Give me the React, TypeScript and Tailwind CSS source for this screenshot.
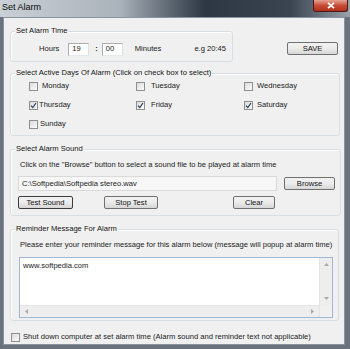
import type { ReactNode } from "react";

function Check({ checked, label, gap = "ml-[4px]" }: { checked?: boolean; label: string; gap?: string }) {
  return (
    <div className="flex items-center h-[10px]">
      <span className="relative w-[9px] h-[9px] border border-[#8e8f8f] bg-gradient-to-br from-[#dcdcdc] to-[#fbfbfb] flex items-center justify-center">
        {checked && (
          <svg width="7" height="7" viewBox="0 0 7 7">
            <path d="M1 3.6 L2.8 5.6 L6 1" fill="none" stroke="#2a3d5a" strokeWidth="1.2" />
          </svg>
        )}
      </span>
      <span className={gap}>{label}</span>
    </div>
  );
}

function Btn({ children, w, focus }: { children: ReactNode; w: string; focus?: boolean }) {
  return (
    <div
      className={`${w} h-[13px] rounded-[2px] border ${focus ? "border-[#3c3c3c]" : "border-[#707070]"} bg-gradient-to-b from-[#f2f2f2] via-[#ebebeb] to-[#d6d6d6] flex items-center justify-center text-[#111]`}
    >
      {children}
    </div>
  );
}

function Group({ title, className, children }: { title: string; className: string; children: ReactNode }) {
  return (
    <fieldset className={`border border-[#d5dfe5] rounded-[3px] shadow-[inset_1px_1px_0_#fff] ${className}`}>
      <legend className="ml-[4px] px-[1px] leading-[10px] text-[#111]">{title}</legend>
      {children}
    </fieldset>
  );
}

export default function App() {
  return (
    <div className="w-[350px] h-[349px] flex flex-col bg-[#6a737d] text-[7.6px] text-[#1a1a1a] overflow-hidden" style={{ fontFamily: '"Liberation Sans", Arial, sans-serif' }}>
      {/* title bar */}
      <div className="h-[17px] shrink-0 flex items-start bg-[#bfc6cd]">
        <div className="w-[120px] h-full bg-gradient-to-r from-[#c9d0d6] to-[#aab2ba] pl-[2px] pt-[2px]">
          <span className="text-[9px] leading-[11px] text-[#0a0a0a]">Set Alarm</span>
        </div>
        <div className="flex-1 h-full bg-gradient-to-r from-[#aab2ba] via-[#2e3844] to-[#3a4450]" />
        <div className="w-[60px] h-full bg-gradient-to-r from-[#3a4450] to-[#9aa3ac] flex justify-end">
          <div className="mr-[2px] w-[35px] h-[12px] rounded-b-[3px] border border-t-0 border-[#4a1a14] bg-gradient-to-b from-[#e4a193] via-[#c74a35] to-[#b0301e] flex items-center justify-center">
            <svg width="8" height="7" viewBox="0 0 8 7">
              <path d="M1 0.8 L7 6.2 M7 0.8 L1 6.2" stroke="#fff" strokeWidth="1.8" />
            </svg>
          </div>
        </div>
      </div>

      {/* client */}
      <div className="flex-1 mx-[3px] mb-[4px] mr-[5px] border border-[#8a949e] bg-[#f0f0f0] flex flex-col pl-[6px] pt-[8px]">
        <div className="flex items-start">
          <Group title="Set Alarm Time" className="w-[223px] h-[36px]">
            <div className="flex items-center h-[14px] mt-[6px] pl-[28px]">
              <span>Hours</span>
              <div className="ml-[9px] w-[21px] h-[13px] bg-white border border-[#abadb3] border-b-[#e3e9ef] border-r-[#dbdfe6] flex items-center pl-[3px]">19</div>
              <span className="ml-[6px] font-bold">:</span>
              <div className="ml-[4px] w-[21px] h-[13px] bg-white border border-[#abadb3] border-b-[#e3e9ef] border-r-[#dbdfe6] flex items-center pl-[3px]">00</div>
              <span className="ml-[12px]">Minutes</span>
              <span className="ml-[33px]">e.g 20:45</span>
            </div>
          </Group>
          <div className="ml-[54px] mt-[16px]">
            <Btn w="w-[51px]">SAVE</Btn>
          </div>
        </div>

        <Group title="Select Active Days Of Alarm (Click on check box to select)" className="mt-[6px] w-[330px] h-[68px]">
          <div className="grid grid-cols-[107px_108px_1fr] gap-y-[9px] pl-[18px] pt-[3px]">
            <Check label="Monday" gap="ml-[4px]" />
            <Check label="Tuesday" gap="ml-[6px]" />
            <Check label="Wednesday" gap="ml-[4px]" />
            <Check checked label="Thursday" gap="ml-[1px]" />
            <Check checked label="Friday" gap="ml-[6px]" />
            <Check checked label="Saturday" gap="ml-[4px]" />
            <Check label="Sunday" gap="ml-[2px]" />
          </div>
        </Group>

        <Group title="Select Alarm Sound" className="mt-[8px] w-[330px] h-[72px]">
          <div className="pl-[9px] pr-[5px] mt-[5px]">
            <div>Click on the "Browse" button to select a sound file to be played at alarm time</div>
            <div className="flex items-center mt-[6px]">
              <div className="ml-[-2px] w-[259px] h-[15px] bg-[#f7f7f7] border border-[#d9d9d9] flex items-center pl-[3px]">C:\Softpedia\Softpedia stereo.wav</div>
              <div className="ml-[7px]">
                <Btn w="w-[51px]">Browse</Btn>
              </div>
            </div>
            <div className="flex items-center mt-[5px] ml-[-2px]">
              <Btn w="w-[55px]" focus>Test Sound</Btn>
              <div className="ml-[31px]">
                <Btn w="w-[54px]">Stop Test</Btn>
              </div>
              <div className="ml-[75px]">
                <Btn w="w-[42px]">Clear</Btn>
              </div>
            </div>
          </div>
        </Group>

        <Group title="Reminder Message For Alarm" className="mt-[8px] w-[329px] h-[97px]">
          <div className="pl-[9px] mt-[5px]">Please enter your reminder message for this alarm below (message will popup at alarm time)</div>
          <div className="ml-[8px] mt-[7px] w-[314px] h-[61px] border border-[#9cb8d4] bg-white flex">
            <div className="flex-1 flex flex-col">
              <div className="flex-1 pl-[3px] pt-[2px]">www.softpedia.com</div>
              <div className="h-[12px] bg-[#eeeeee] border-t border-[#e4e4e4] flex items-center justify-between px-[5px]">
                <svg width="3" height="5" viewBox="0 0 3 5"><path d="M3 0 L0 2.5 L3 5 Z" fill="#a8a8a8" /></svg>
                <svg width="3" height="5" viewBox="0 0 3 5"><path d="M0 0 L3 2.5 L0 5 Z" fill="#a8a8a8" /></svg>
              </div>
            </div>
            <div className="w-[13px] bg-[#eeeeee] border-l border-[#e4e4e4] flex flex-col">
              <div className="flex-1 flex flex-col items-center justify-between py-[5px]">
                <svg width="5" height="3" viewBox="0 0 5 3"><path d="M0 3 L2.5 0 L5 3 Z" fill="#a8a8a8" /></svg>
                <svg width="5" height="3" viewBox="0 0 5 3"><path d="M0 0 L2.5 3 L5 0 Z" fill="#a8a8a8" /></svg>
              </div>
              <div className="h-[12px] bg-[#f0f0f0]" />
            </div>
          </div>
        </Group>

        <div className="mt-[11px] ml-[1px]">
          <Check label="Shut down computer at set alarm time (Alarm sound and reminder text not applicable)" gap="ml-[3px]" />
        </div>
      </div>
    </div>
  );
}
